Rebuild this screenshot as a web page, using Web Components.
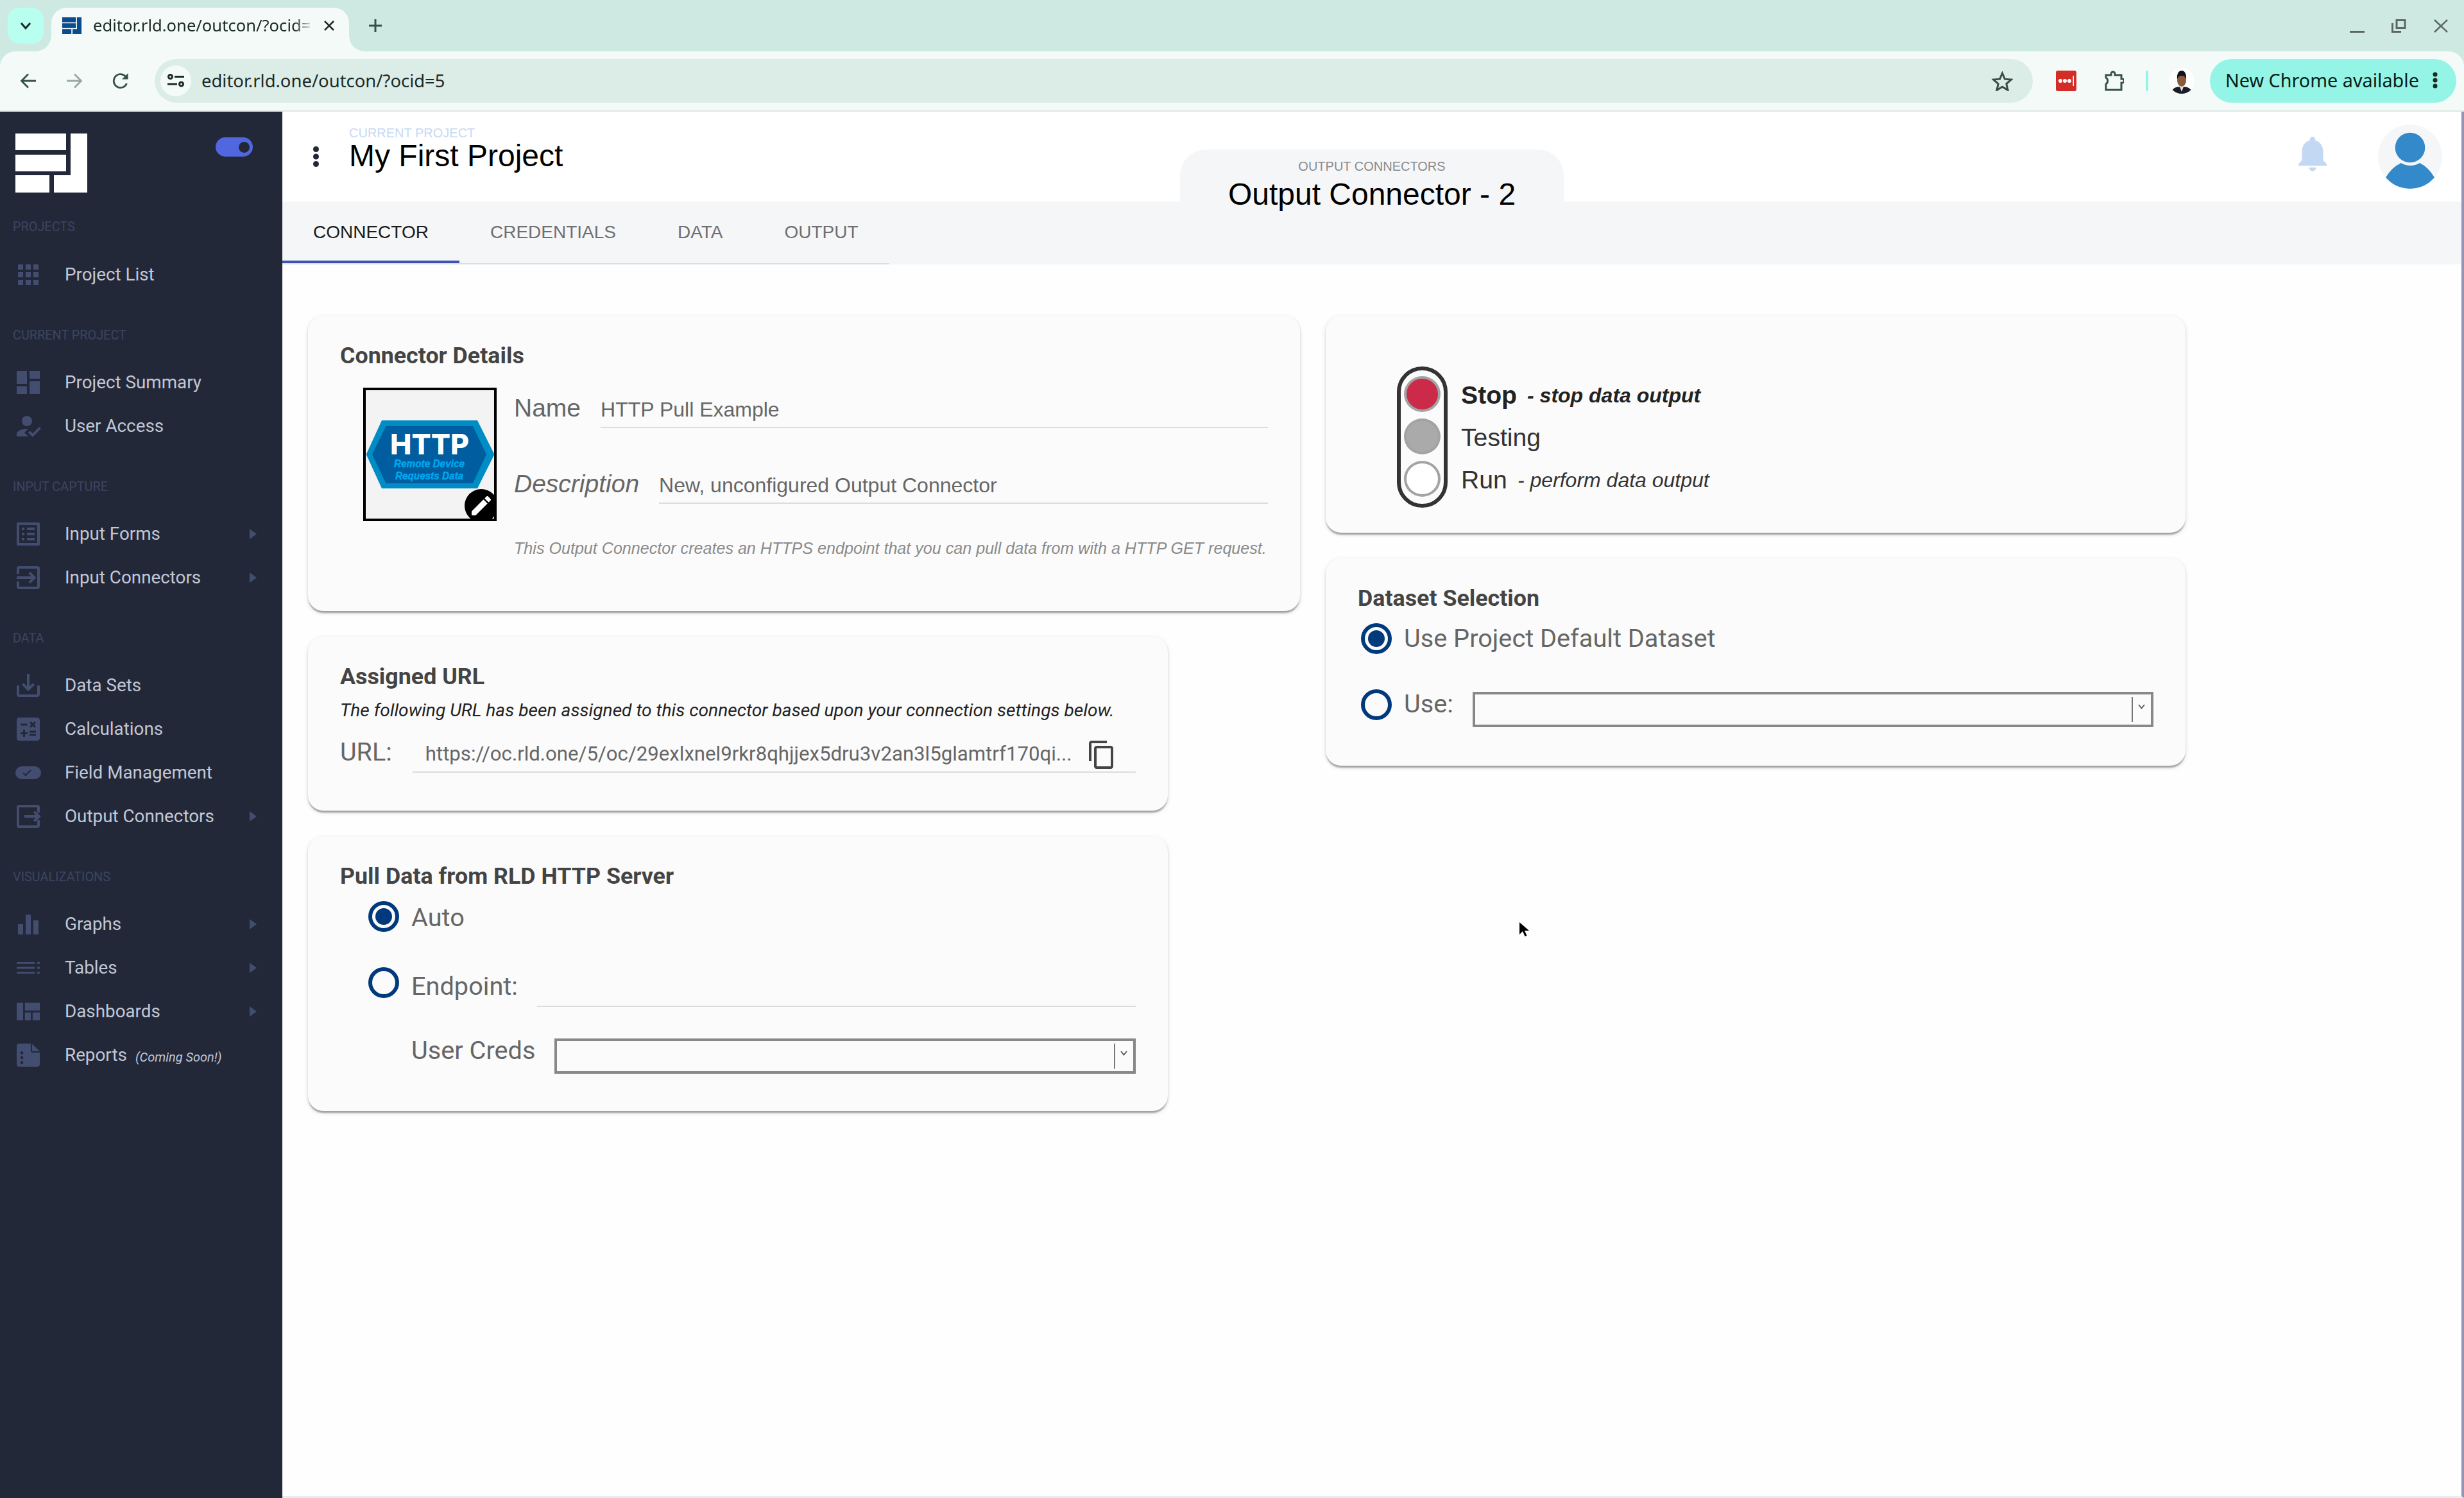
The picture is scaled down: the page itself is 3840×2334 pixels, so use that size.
<!doctype html>
<html><head><meta charset="utf-8"><title>RLD editor</title>
<style>html,body{margin:0;padding:0;background:#fefefe;overflow:hidden}</style></head>
<body>
<rl-app>
  <rl-chrome></rl-chrome>
  <rl-body>
    <rl-sidebar>
      <rl-nav-label first>PROJECTS</rl-nav-label>
      <rl-nav icon="apps">Project List</rl-nav>
      <rl-nav-label>CURRENT PROJECT</rl-nav-label>
      <rl-nav icon="summary">Project Summary</rl-nav>
      <rl-nav icon="user">User Access</rl-nav>
      <rl-nav-label>INPUT CAPTURE</rl-nav-label>
      <rl-nav icon="forms" arrow>Input Forms</rl-nav>
      <rl-nav icon="input" arrow>Input Connectors</rl-nav>
      <rl-nav-label>DATA</rl-nav-label>
      <rl-nav icon="save">Data Sets</rl-nav>
      <rl-nav icon="calc">Calculations</rl-nav>
      <rl-nav icon="toggle">Field Management</rl-nav>
      <rl-nav icon="output" arrow>Output Connectors</rl-nav>
      <rl-nav-label>VISUALIZATIONS</rl-nav-label>
      <rl-nav icon="graphs" arrow>Graphs</rl-nav>
      <rl-nav icon="tables" arrow>Tables</rl-nav>
      <rl-nav icon="dash" arrow>Dashboards</rl-nav>
      <rl-nav icon="reports" note="(Coming Soon!)">Reports</rl-nav>
    </rl-sidebar>
    <rl-main>
      <rl-header></rl-header>
      <rl-tabs>
        <rl-tab active>CONNECTOR</rl-tab>
        <rl-tab>CREDENTIALS</rl-tab>
        <rl-tab>DATA</rl-tab>
        <rl-tab>OUTPUT</rl-tab>
      </rl-tabs>
      <rl-content>
        <rl-column slot="left">
          <rl-card style="--w:1546px;--h:460px">
            <span slot="title">Connector Details</span>
            <rl-details></rl-details>
          </rl-card>
          <rl-card style="--w:1340px;--h:271px">
            <span slot="title">Assigned URL</span>
            <rl-url></rl-url>
          </rl-card>
          <rl-card style="--w:1340px;--h:428px">
            <span slot="title">Pull Data from RLD HTTP Server</span>
            <rl-radio checked label="Auto" style="--left:44px;--mt:17px;--off:3.5px"></rl-radio>
            <rl-radio label="Endpoint:" style="--left:44px;--mt:55px;--off:7.5px"><rl-line></rl-line></rl-radio>
            <rl-pick label="User Creds" style="--left:111px;--mt:46px;--off:3px"></rl-pick>
          </rl-card>
        </rl-column>
        <rl-column slot="right">
          <rl-card style="--w:1340px;--h:338px">
            <rl-signal></rl-signal>
          </rl-card>
          <rl-card style="--w:1340px;--h:322.5px">
            <span slot="title">Dataset Selection</span>
            <rl-radio checked label="Use Project Default Dataset" style="--left:5px;--mt:17px;--off:1.5px"></rl-radio>
            <rl-radio label="Use:" style="--left:5px;--mt:55px;--off:.5px"><rl-select style="--top:4px"></rl-select></rl-radio>
          </rl-card>
        </rl-column>
      </rl-content>
    </rl-main>
  </rl-body>
  <rl-cursor></rl-cursor>
</rl-app>
<script>
const ICONS={
 apps:'<path d="M4 8h4V4H4v4zm6 12h4v-4h-4v4zm-6 0h4v-4H4v4zm0-6h4v-4H4v4zm6 0h4v-4h-4v4zm6-10v4h4V4h-4zm-6 4h4V4h-4v4zm6 6h4v-4h-4v4zm0 6h4v-4h-4v4z"/>',
 summary:'<path d="M3 13h8V3H3v10zm0 8h8v-6H3v6zm10 0h8V11h-8v10zm0-18v6h8V3h-8z"/>',
 user:'<path d="M9 17l3-2.94c-.39-.04-.68-.06-1-.06-2.67 0-8 1.34-8 4v2h9l-3-3zm2-5c2.21 0 4-1.79 4-4s-1.79-4-4-4-4 1.79-4 4 1.79 4 4 4z"/><path d="M15.47 20.5L12 17l1.4-1.41 2.07 2.08 5.13-5.17 1.4 1.41z"/>',
 forms:'<path d="M19 5v14H5V5h14m1.1-2H3.9c-.5 0-.9.4-.9.9v16.2c0 .4.4.9.9.9h16.2c.4 0 .9-.5.9-.9V3.9c0-.5-.5-.9-.9-.9zM11 7h6v2h-6V7zm0 4h6v2h-6v-2zm0 4h6v2h-6zM7 7h2v2H7zm0 4h2v2H7zm0 4h2v2H7z"/>',
 input:'<path d="M3 9V5a2 2 0 0 1 2-2h14a2 2 0 0 1 2 2v14a2 2 0 0 1-2 2H5a2 2 0 0 1-2-2v-4h2v4h14V5H5v4H3z"/><path d="M13.6 16.6L12.2 15.2l2.2-2.2H3v-2h11.4l-2.2-2.2 1.4-1.4L18.2 12z"/>',
 save:'<path d="M19 12v7H5v-7H3v7c0 1.1.9 2 2 2h14c1.1 0 2-.9 2-2v-7h-2zm-6 .67l2.59-2.58L17 11.5l-5 5-5-5 1.41-1.41L11 12.67V3h2z"/>',
 calc:'<path d="M19 3H5c-1.1 0-2 .9-2 2v14c0 1.1.9 2 2 2h14c1.1 0 2-.9 2-2V5c0-1.1-.9-2-2-2zm-5.97 4.06L14.09 6l1.41 1.41L16.91 6l1.06 1.06-1.41 1.41 1.41 1.41-1.06 1.06-1.41-1.4-1.41 1.41-1.06-1.06 1.41-1.41-1.41-1.42zm-6.78.66h5v1.5h-5v-1.5zM11.5 16h-2v2H8v-2H6v-1.5h2v-2h1.5v2h2V16zm6.5 1.25h-5v-1.5h5v1.5zm0-2.5h-5v-1.5h5v1.5z"/>',
 toggle:'<path d="M7 7h10a5 5 0 0 1 0 10H7A5 5 0 0 1 7 7z"/><path d="M8 12l2 2 4-4" fill="none" stroke="#232838" stroke-width="1"/>',
 output:'<path d="M21 9V5a2 2 0 0 0-2-2H5a2 2 0 0 0-2 2v14a2 2 0 0 0 2 2h14a2 2 0 0 0 2-2v-4h-2v4H5V5h14v4z"/><path d="M17.3 7.6l-1.4 1.4 2 2H9v2h8.9l-2 2 1.4 1.4L22 12z"/>',
 graphs:'<path d="M4 12h4v8H4zM10 4.500h4V20h-4zM16 9h4v11h-4z"/>',
 tables:'<path d="M3 7.500h14v1.400H3zM3 11.300h14v1.400H3zM3 15.100h14v1.400H3zM19 7.500h2v1.400h-2zM19 11.300h2v1.400h-2zM19 15.100h2v1.400h-2z"/>',
 dash:'<path d="M3 5.200h5v13.600H3zM9.400 5.200H21v6.100H9.400zM9.400 12.700H14v6.100H9.400zM15.400 12.700H21v6.100h-5.600z"/>',
 reports:'<path fill-rule="evenodd" d="M5 3h9v5.500a1.500 1.500 0 0 0 1.500 1.500H21v9a2 2 0 0 1-2 2H5a2 2 0 0 1-2-2V5a2 2 0 0 1 2-2zm2 6a1.200 1.200 0 1 0 0 2.400A1.200 1.200 0 0 0 7 9zm0 3.800a1.200 1.200 0 1 0 0 2.400 1.200 1.200 0 0 0 0-2.400zm0 3.800a1.200 1.200 0 1 0 0 2.400 1.200 1.200 0 0 0 0-2.400z"/><path d="M15 3.300L21 9h-6z"/>'
};
function def(name,css,html){
  const cls=class extends HTMLElement{
    constructor(){super();const r=this.attachShadow({mode:'open'});
      const h=typeof html==='function'?html(this):html;
      r.innerHTML='<style>'+css+'</style>'+h;}
  };
  customElements.define(name,cls);
}
const attr=(el,a)=>(el.getAttribute(a)||'');

def('rl-app',':host{display:flex;flex-direction:column;position:relative;width:3840px;height:2334px;overflow:hidden;background:#fefefe;font-family:Roboto,"Liberation Sans",sans-serif}','<slot></slot>');

def('rl-chrome',`
:host{display:block;background:#cee9e2;font-family:"Noto Sans","Open Sans",sans-serif;color:#1b2a26}
.strip{height:80px;display:flex;box-sizing:border-box;padding-top:12px}
.search{width:56px;height:56px;margin-left:12px;border-radius:18px;background:#b9fff0;display:flex;align-items:center;justify-content:center}
.tab{position:relative;width:464px;height:68px;margin-left:12px;background:#f4faf7;border-radius:24px 24px 0 0;display:flex;align-items:center;box-sizing:border-box;padding:0 0 12px 17px}
.tab::before,.tab::after{content:"";position:absolute;bottom:0;width:24px;height:24px}
.tab::before{left:-24px;background:radial-gradient(circle at 0 0,transparent 23.5px,#f4faf7 24px)}
.tab::after{right:-24px;background:radial-gradient(circle at 100% 0,transparent 23.5px,#f4faf7 24px)}
.fav{width:30px;height:26px;flex:none;display:block}
.title{width:345px;margin-left:18px;font-size:25.6px;line-height:40px;white-space:nowrap;-webkit-mask-image:linear-gradient(90deg,#000 91%,transparent 100%);mask-image:linear-gradient(90deg,#000 91%,transparent 100%)}
.x{margin-left:15px;width:16px;height:16px;display:block}
.plus{margin:18px 0 0 31px;width:20px;height:20px;display:block}
.win{margin-left:auto;display:flex;align-items:flex-start;padding-top:18px;padding-right:25px;gap:0}
.win svg{display:block}
.bar{height:92px;box-sizing:border-box;background:#f4faf7;border-radius:24px 24px 0 0;display:flex;align-items:center;padding:0 12px 0 8px}
.line{height:2px;background:#dce8e4}
.btn{width:72px;height:72px;display:flex;align-items:center;justify-content:center;flex:none}
.omni{flex:1;height:68px;margin-left:17px;border-radius:34px;background:#dcede8;display:flex;align-items:center;padding:0 31px 0 9px}
.site{width:48px;height:48px;border-radius:50%;background:#f4faf7;display:flex;align-items:center;justify-content:center;flex:none}
.url{margin-left:16px;font-size:27.45px;line-height:40px;white-space:nowrap;flex:1}
.star{display:block;flex:none}
.lp{width:32px;height:32px;margin-left:36px;display:block;flex:none}
.ext{width:32px;height:32px;margin-left:42px;display:block;flex:none}
.div{width:4px;height:32px;margin-left:34px;background:#94f5e6;border-radius:2px;flex:none}
.ava{width:40px;height:40px;margin-left:32px;display:block;flex:none}
.chip{width:384px;height:68px;margin-left:24px;box-sizing:border-box;padding:0 0 3px 24px;background:#94f5e6;border-radius:34px;display:flex;align-items:center;font-size:28.76px;white-space:nowrap;color:#062018;flex:none}
.chip svg{margin-left:20px;display:block}
`,`
<div class="strip">
 <div class="search"><svg width="18" height="12" viewBox="0 0 18 12"><path d="M2 2l7 8 7-8" fill="none" stroke="#1b2a26" stroke-width="3"/></svg></div>
 <div class="tab">
  <svg class="fav" viewBox="0 0 112 92" preserveAspectRatio="none"><path fill="#0a4a90" d="M0 0h80v27H0zM0 33h80v26H0zM0 65h53v27H0zM86 0h26v92H60V65h26z"/></svg>
  <div class="title">editor.rld.one/outcon/?ocid=</div>
  <svg class="x" viewBox="0 0 16 16"><path d="M1 1l14 14M15 1L1 15" stroke="#1b2a26" stroke-width="2.600"/></svg>
 </div>
 <svg class="plus" viewBox="0 0 20 20"><path d="M10 0v20M0 10h20" stroke="#37504a" stroke-width="3"/></svg>
 <div class="win">
  <svg width="23" height="21" viewBox="0 0 23 21" style="margin-right:42px"><rect y="18" width="23" height="3" fill="#5d6664"/></svg>
  <svg width="23" height="21" viewBox="0 0 23 21" style="margin-right:43px"><path d="M8 1.500h13v12H8zM1.500 6v13.500H15" fill="none" stroke="#5d6664" stroke-width="3"/></svg>
  <svg width="22" height="21" viewBox="0 0 22 21"><path d="M1 1l20 19M21 1L1 20" stroke="#5d6664" stroke-width="2.500"/></svg>
 </div>
</div>
<div class="bar">
 <div class="btn"><svg width="24" height="24" viewBox="0 0 24 24"><path d="M24 12H3M12 1.500L1.500 12 12 22.500" fill="none" stroke="#37504a" stroke-width="2.800"/></svg></div>
 <div class="btn"><svg width="24" height="24" viewBox="0 0 24 24"><path d="M0 12h21M12 1.500L22.500 12 12 22.500" fill="none" stroke="#9aa8a4" stroke-width="2.800"/></svg></div>
 <div class="btn"><svg width="26" height="26" viewBox="0 0 26 26"><path d="M22.500 17A10.500 10.500 0 1 1 20 5.500L24 9" fill="none" stroke="#37504a" stroke-width="2.800"/><path d="M24.500 1v9.500H15z" fill="#37504a"/></svg></div>
 <div class="omni">
  <div class="site"><svg width="26" height="22" viewBox="0 0 26 22"><g fill="none" stroke="#1b2a26" stroke-width="3"><circle cx="4.500" cy="4.500" r="3"/><path d="M11 4.500h15M0 16h15"/><circle cx="21.500" cy="16" r="3"/></g></svg></div>
  <div class="url">editor.rld.one/outcon/?ocid=5</div>
  <svg class="star" width="33" height="31" viewBox="0 0 33 31"><path d="M16.500 3l3.900 9.200 10 .9-7.600 6.500 2.300 9.800-8.600-5.200-8.600 5.200 2.300-9.800L2.600 13.100l10-.9z" fill="none" stroke="#3f4a47" stroke-width="3"/></svg>
 </div>
 <svg class="lp" viewBox="0 0 32 32"><rect width="32" height="32" rx="3" fill="#d32d27"/><circle cx="7" cy="16" r="3" fill="#fff"/><circle cx="14" cy="16" r="3" fill="#fff"/><circle cx="21" cy="16" r="3" fill="#fff"/><rect x="26.500" y="8" width="1.500" height="16" fill="#fff"/></svg>
 <svg class="ext" viewBox="0 0 32 32"><path d="M4 7h8V5a3 3 0 0 1 6 0v2h10v6h1.500a3 3 0 0 1 0 6H28v11H4v-9a6 6 0 0 0 0-10z" fill="none" stroke="#37504a" stroke-width="3"/></svg>
 <div class="div"></div>
 <svg class="ava" viewBox="0 0 40 40"><circle cx="20" cy="20" r="20" fill="#fff"/><clipPath id="ac"><circle cx="20" cy="20" r="20"/></clipPath><g clip-path="url(#ac)"><path d="M4 40c0-8 6-11 16-11s16 3 16 11z" fill="#1b1d26"/><path d="M17 29l3 8 3-8z" fill="#dfe3ee"/><ellipse cx="20" cy="19" rx="7" ry="10" fill="#8a5a3c"/><path d="M13 18c-1-10 3-14 7-14s8 4 7 14c-1-4-3-6-7-6s-6 2-7 6z" fill="#12131a"/></g></svg>
 <div class="chip">New Chrome available<svg width="10" height="28" viewBox="0 0 10 28"><circle cx="5" cy="5" r="3.500" fill="#1b2a26"/><circle cx="5" cy="14" r="3.500" fill="#1b2a26"/><circle cx="5" cy="23" r="3.500" fill="#1b2a26"/></svg></div>
</div>
<div class="line"></div>`);

def('rl-body',':host{display:flex;flex:1;min-height:0}','<slot></slot>');

def('rl-sidebar',`
:host{display:block;width:440px;flex:none;background:#232838;overflow:hidden}
.top{height:120px;display:flex;align-items:flex-start}
.logo{display:block;margin:34px 0 0 24px}
.toggle{margin:40px 46px 0 auto;width:58px;height:30px;border-radius:15px;background:#5067e0;position:relative}
.toggle::after{content:"";position:absolute;right:5px;top:7px;width:17px;height:17px;border-radius:50%;background:#232838}
`,`<div class="top">
 <svg class="logo" width="112" height="92" viewBox="0 0 112 92"><path fill="#fff" d="M0 0h79v26H0zM0 33h79v26H0zM0 65h53v27H0zM86 0h26v92H60V65h26z"/></svg>
 <div class="toggle"></div>
</div><slot></slot>`);

def('rl-nav-label',`
:host{display:block;height:100px;box-sizing:border-box;padding:50px 0 0 20px;font:19.85px/22px Roboto,sans-serif;color:#3c4561;white-space:nowrap}
:host([first]){padding-top:49px}
`,'<slot></slot>');

def('rl-nav',`
:host{display:flex;align-items:center;height:68px;padding-left:20px;color:#c1c7d6;font:27.8px/40px Roboto,sans-serif;white-space:nowrap}
svg{display:block;flex:none;fill:#424d70}
.t{margin-left:33px}
.note{margin-left:13px;font-style:italic;font-size:20px;line-height:30px;padding-top:6px}
.arrow{margin-left:auto;margin-right:40px;width:0;height:0;border-left:11px solid #424d70;border-top:8px solid transparent;border-bottom:8px solid transparent}
`,el=>`<svg width="48" height="48" viewBox="0 0 24 24">${ICONS[attr(el,'icon')]||''}</svg><span class="t"><slot></slot></span>${el.hasAttribute('note')?`<span class="note">${attr(el,'note')}</span>`:''}${el.hasAttribute('arrow')?'<span class="arrow"></span>':''}`);

def('rl-main',':host{display:flex;flex-direction:column;flex:1;min-width:0;border-right:4px solid #9494b8;border-bottom:3px solid #ececec}','<slot></slot>');

def('rl-header',`
:host{display:flex;position:relative;height:140px;background:#fff;padding-left:48px;align-items:flex-start;font-family:"Liberation Sans",sans-serif}
.keb{display:block;margin-top:54px}
.col{margin-left:47px;padding-top:21px}
.sup{font-size:20px;line-height:24px;color:#c6d9f3}
.name{font-size:48px;line-height:56px;color:#000;margin-top:-4px}
.center{position:absolute;left:1399px;top:59px;width:598px;height:81px;background:#f5f6f8;border-radius:40px 40px 0 0;text-align:center;padding-top:14px;box-sizing:border-box}
.center .sup{color:#8a8a8a}
.center .name{margin-top:4px}
.bell{margin:32px 69px 0 auto;display:block}
.ava{margin:20px 30px 0 0;display:block}
`,`<svg class="keb" width="9" height="32" viewBox="0 0 9 32"><circle cx="4.500" cy="4.500" r="4.500" fill="#232838"/><circle cx="4.500" cy="16" r="4.500" fill="#232838"/><circle cx="4.500" cy="27.500" r="4.500" fill="#232838"/></svg>
<div class="col"><div class="sup">CURRENT PROJECT</div><div class="name">My First Project</div></div>
<div class="center"><div class="sup">OUTPUT CONNECTORS</div><div class="name">Output Connector - 2</div></div>
<svg class="bell" width="66" height="66" viewBox="0 0 24 24"><path fill="#c3d8f3" d="M12 22c1.100 0 2-.9 2-2h-4c0 1.100.89 2 2 2zm6-6v-5c0-3.070-1.640-5.640-4.500-6.320V4c0-.83-.67-1.500-1.500-1.500s-1.500.67-1.500 1.500v.68C7.630 5.360 6 7.920 6 11v5l-2 2v1h16v-1l-2-2z"/></svg>
<svg class="ava" width="100" height="100" viewBox="0 0 100 100"><circle cx="50" cy="50" r="50" fill="#f5f6f8"/><circle cx="50" cy="36" r="23.300" fill="#3389c9"/><path fill="#3389c9" d="M12 82.500Q22 66 36 60A29 29 0 0 0 65 60Q78 66 88 82.500A50 50 0 0 1 12 82.500Z"/></svg>`);

def('rl-tabs',':host{display:flex;height:98px;background:#f5f6f8;align-items:flex-start}.list{display:flex;border-bottom:2px solid #dedede}','<div class="list"><slot></slot></div>');
def('rl-tab',`
:host{display:block;height:96px;box-sizing:border-box;padding:0 48px;font:28px/96px "Liberation Sans",sans-serif;color:#6f6f6f;white-space:nowrap;position:relative}
:host([active]){color:#1b1b1b}
:host([active])::after{content:"";position:absolute;left:0;right:0;bottom:0;height:4px;background:#3f51b5}
`,'<slot></slot>');

def('rl-content',':host{display:flex;flex:1;min-height:0;padding:80px 0 0 40px;gap:40px;align-items:flex-start;background:#fefefe}','<slot name="left"></slot><slot name="right"></slot>');
def('rl-column',':host{display:flex;flex-direction:column;gap:40px;align-items:flex-start}','<slot></slot>');

def('rl-card',`
:host{display:block;width:var(--w);height:var(--h);box-sizing:border-box;padding:40px 50px 0 50px;background:#fbfbfb;border-radius:24px;box-shadow:0 5px 2.500px -2.500px rgba(0,0,0,.2),0 2.500px 2.500px rgba(0,0,0,.14),0 2.500px 7.500px rgba(0,0,0,.12)}
.title{display:block;font:700 35.8px/44px Roboto,sans-serif;color:#444}
`,'<slot name="title" class="title"></slot><slot></slot>');

def('rl-details',`
:host{display:flex;margin-top:28px;padding-left:36px;font-family:"Liberation Sans",sans-serif}
.tile{display:block;flex:none}
.r{flex:1;margin-left:27px;padding-top:9.500px;min-width:0}
.row{display:flex;align-items:baseline;gap:31px;white-space:nowrap}
.row+.row{margin-top:65.500px}
.lab{font-size:39px;line-height:44px;color:#666}
.val{flex:1;font-size:32px;line-height:40px;color:#666;padding-bottom:7px;border-bottom:2px solid #dcdcdc}
i{font-style:italic}
.help{margin-top:53px;font-size:25.120px;line-height:32px;font-style:italic;color:#8a8a8a;white-space:nowrap}
`,`<svg class="tile" width="208" height="208" viewBox="0 0 208 208">
 <rect x="2" y="2" width="204" height="204" fill="#f3f3f3" stroke="#000" stroke-width="4"/>
 <path fill="#008cc4" d="M29 51H178L204.500 104 178 157H29L4.700 104z"/>
 <path fill="#005da0" d="M35.500 60H171L192 104 171 149H35.500L14 104z"/>
 <text x="103.500" y="103.500" text-anchor="middle" fill="#fff" font-family="Inter,Liberation Sans,sans-serif" font-weight="800" font-size="44" textLength="123" lengthAdjust="spacingAndGlyphs">HTTP</text>
 <text x="103" y="124" text-anchor="middle" fill="#00a9f0" stroke="#00a9f0" stroke-width=".3" font-family="Liberation Sans,sans-serif" font-weight="700" font-style="italic" font-size="16.5" textLength="110" lengthAdjust="spacingAndGlyphs">Remote Device</text>
 <text x="103" y="143" text-anchor="middle" fill="#00a9f0" stroke="#00a9f0" stroke-width=".3" font-family="Liberation Sans,sans-serif" font-weight="700" font-style="italic" font-size="16.5" textLength="106" lengthAdjust="spacingAndGlyphs">Requests Data</text>
 <clipPath id="tc"><rect width="208" height="208"/></clipPath>
 <circle cx="184" cy="184" r="26" fill="#000" clip-path="url(#tc)"/>
 <path fill="#fff" transform="translate(164,164) scale(1.667)" d="M3 17.250V21h3.750L17.810 9.940l-3.750-3.750L3 17.250zM20.710 7.040c.39-.39.39-1.020 0-1.410l-2.340-2.340c-.39-.39-1.020-.39-1.410 0l-1.830 1.830 3.750 3.750 1.830-1.830z"/>
</svg>
<div class="r">
 <div class="row"><span class="lab">Name</span><span class="val">HTTP Pull Example</span></div>
 <div class="row"><i class="lab">Description</i><span class="val">New, unconfigured Output Connector</span></div>
 <div class="help">This Output Connector creates an HTTPS endpoint that you can pull data from with a HTTP GET request.</div>
</div>`);

def('rl-url',`
:host{display:block;font-family:Roboto,sans-serif}
.sub{margin-top:13px;font-style:italic;font-size:28.170px;line-height:36px;color:#222;white-space:nowrap}
.row{display:flex;align-items:baseline;gap:32px;margin-top:24.500px}
.lab{font-size:39.500px;line-height:44px;color:#666}
.val{flex:1;display:flex;align-items:flex-start;border-bottom:2px solid #dcdcdc;padding-bottom:7px;min-width:0}
.txt{flex:1;font-size:31.180px;line-height:40px;color:#666;padding-left:20px;white-space:nowrap}
svg{display:block;flex:none;margin:-3px 29px -11px 0}
`,`<div class="sub">The following URL has been assigned to this connector based upon your connection settings below.</div>
<div class="row"><span class="lab">URL:</span><div class="val"><span class="txt">https://oc.rld.one/5/oc/29exlxnel9rkr8qhjjex5dru3v2an3l5glamtrf170qi...</span>
<svg width="48" height="48" viewBox="0 0 24 24"><path fill="#444" d="M16 1H4c-1.100 0-2 .9-2 2v14h2V3h12V1zm3 4H8c-1.100 0-2 .9-2 2v14c0 1.100.9 2 2 2h11c1.100 0 2-.9 2-2V7c0-1.100-.9-2-2-2zm0 16H8V7h11v14z"/></svg></div></div>`);

const radioCss=`
:host{display:flex;align-items:flex-start;margin-left:var(--left,0);margin-top:var(--mt,0);font-family:Roboto,sans-serif}
.c{flex:none;width:48px;height:48px;box-sizing:border-box;border-radius:50%;border:6px solid #00397c;display:flex;align-items:center;justify-content:center;margin-right:19px}
.c b{width:26px;height:26px;border-radius:50%;background:#00397c;display:block}
.l{font-size:39.700px;line-height:44px;color:#666;white-space:nowrap;margin-top:var(--off,0);flex:none;margin-right:30px}
.rest{flex:1;display:block;min-width:0}
`;
def('rl-radio',radioCss,el=>`<span class="c">${el.hasAttribute('checked')?'<b></b>':''}</span><span class="l">${attr(el,'label')}</span><span class="rest"><slot></slot></span>`);
def('rl-line',':host{display:block;height:60px;border-bottom:2px solid #dcdcdc}','');
def('rl-select',`
:host{display:block;height:55px;box-sizing:border-box;margin-top:var(--top,0);border:4px solid #888;background:#fbfbfb;position:relative}
.s{position:absolute;right:28px;top:4px;bottom:4px;width:2px;background:#777}
svg{position:absolute;right:9px;top:15px;display:block}
`,'<div class="s"></div><svg width="11" height="8" viewBox="0 0 11 8"><path d="M1 1l4.500 5.500L10 1" fill="none" stroke="#555" stroke-width="1.800"/></svg>');
def('rl-pick',`
:host{display:flex;align-items:flex-start;margin-left:var(--left,0);margin-top:var(--mt,0);font-family:Roboto,sans-serif}
.l{font-size:39.700px;line-height:44px;color:#666;white-space:nowrap;flex:none;margin-right:30px}
rl-select{flex:1;--top:var(--off,0)}
`,el=>`<span class="l">${attr(el,'label')}</span><rl-select></rl-select>`);

def('rl-signal',`
:host{display:flex;margin:39px 0 0 61px;font-family:"Liberation Sans",sans-serif;color:#333}
.lamp{width:79px;height:219.500px;box-sizing:border-box;border:6px solid #333;border-radius:40px;padding:9px 5px 10px;display:flex;flex-direction:column;gap:10px;flex:none}
.lamp span{display:block;width:57px;height:56px;box-sizing:border-box;border-radius:50%;border:4px solid #a3a3a3;flex:none}
.red{background:#cc2a49}.gray{background:#aaa}.white{background:#fff}
.labs{margin:12px 0 0 21px}
.row{height:66px;display:flex;align-items:center;font-size:39.200px;white-space:nowrap}
.row i{font-size:32px;margin-left:16px}
.on{font-weight:700;color:#222}
`,`<div class="lamp"><span class="red"></span><span class="gray"></span><span class="white"></span></div>
<div class="labs">
 <div class="row on">Stop<i>- stop data output</i></div>
 <div class="row">Testing</div>
 <div class="row">Run<i>- perform data output</i></div>
</div>`);

def('rl-cursor',':host{position:absolute;left:2368px;top:1437px;display:block;width:16px;height:24px}svg{display:block}','<svg width="16" height="24" viewBox="0 0 16 24"><path d="M0 0v19l5-5 3.500 8 3-1.300L8 13h7z" fill="#000"/></svg>');
</script>
</body></html>
